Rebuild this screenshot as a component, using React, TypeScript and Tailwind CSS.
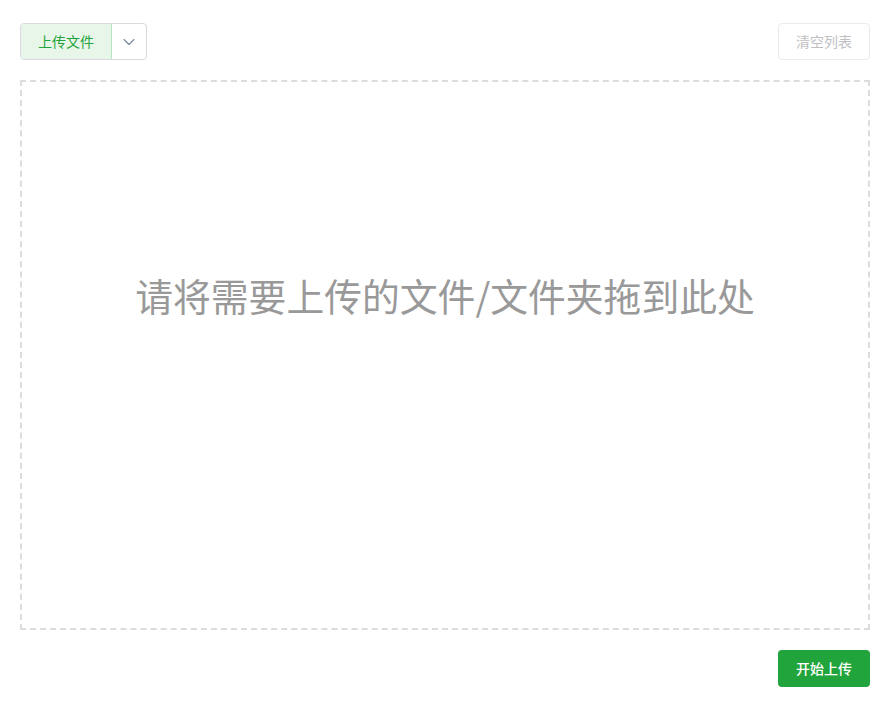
import { ChevronDown } from "lucide-react";

export default function App() {
  return (
    <div
      className="w-[889px] h-[703px] bg-white pl-5 pr-[19px] pt-[23px]"
      style={{ fontFamily: '"Noto Sans CJK SC", "Noto Sans", sans-serif' }}
    >
      <div className="flex items-center justify-between">
        <div className="flex h-[37px] rounded-[4px] border border-[#d9d9de] overflow-hidden">
          <button className="w-[91px] bg-[#e8f6ea] border-r border-[#b9e2c0] text-[14px] text-[#1fa33a]">
            上传文件
          </button>
          <button className="w-[34px] flex items-center justify-center text-[#7a8699]">
            <ChevronDown size={20} strokeWidth={1.3} />
          </button>
        </div>
        <button className="h-[37px] w-[92px] rounded-[4px] border border-[#ebebef] text-[14px] text-[#c0c0c4]">
          清空列表
        </button>
      </div>

      <div className="mt-5 h-[550px] border-2 border-dashed border-[#dcdcdc] flex justify-center pt-[184px]">
        <p className="text-[37.8px] leading-[57px] text-[#999999] h-[57px]">请将需要上传的文件/文件夹拖到此处</p>
      </div>

      <div className="mt-5 flex justify-end">
        <button className="h-[37px] w-[92px] rounded-[4px] bg-[#20a43b] text-white text-[14px] font-medium">
          开始上传
        </button>
      </div>
    </div>
  );
}
